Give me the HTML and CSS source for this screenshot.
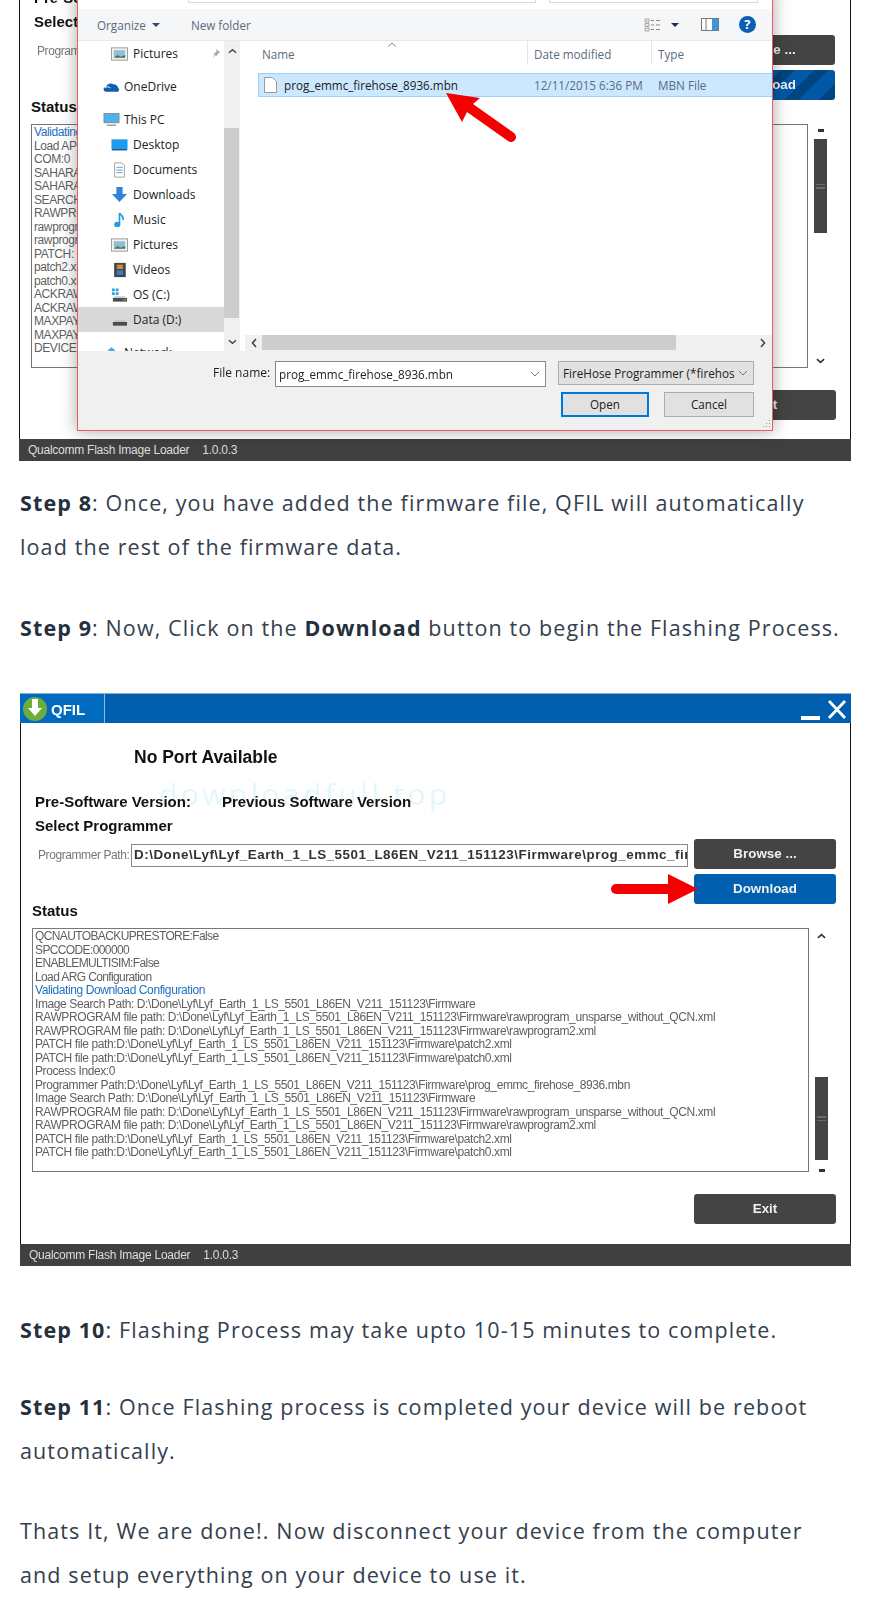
FILE: index.html
```html
<!DOCTYPE html>
<html lang="en">
<head>
<meta charset="utf-8">
<title>Flashing steps</title>
<link rel="stylesheet" href="styles.css">
</head>
<body>
<article class="article">
  <figure class="shot shot-first">
    <div class="qfil qfil-clipped">
      <div class="title"><div class="title-tab"><svg class="logo" viewBox="0 0 24 24"><circle cx="12" cy="12" r="12" fill="#6cae3c"/><path d="M9 2h6v9h4l-7 8-7-8h4z" fill="#fff"/></svg><span>QFIL</span></div><div class="win-btns"><i class="win-min"></i><svg class="win-x" viewBox="0 0 20 20"><path d="M2 1l16 17M18 1L2 18" stroke="#fff" stroke-width="2.800" fill="none"/></svg></div></div>
      <div class="qfil-body">
        <p class="port">No Port Available</p>
        <div class="versions"><span>Pre-Software Version:</span><span>Previous Software Version</span></div>
        <p class="select">Select Programmer</p>
        <div class="path-row">
          <span class="path-label">Programmer Path:</span>
          <div class="path-input"></div>
          <div class="buttons"><div class="btn">Browse ...</div><div class="btn btn-stripe">Download</div></div>
        </div>
        <p class="status">Status</p>
        <div class="log-row">
          <div class="log">
            <div class="blue">Validating</div><div>Load APPS</div><div>COM:0</div><div>SAHARA</div><div>SAHARA</div><div>SEARCH</div><div>RAWPROG</div><div>rawprogram</div><div>rawprogram</div><div>PATCH:</div><div>patch2.xml</div><div>patch0.xml</div><div>ACKRAW</div><div>ACKRAW</div><div>MAXPAYLOAD</div><div>MAXPAYLOAD</div><div>DEVICE</div>
          </div>
          <div class="sbar">
            <i class="sbar-minus"></i>
            <div class="thumb thumb-first"><i></i><i></i></div>
            <svg class="sbar-chev sbar-end" viewBox="0 0 10 6"><path d="M1 1l4 3.500 4-3.500" stroke="#333" stroke-width="1.800" fill="none"/></svg>
          </div>
        </div>
        <div class="exit-row"><div class="btn">Exit</div></div>
      </div>
      <div class="statusbar"><span>Qualcomm Flash Image Loader</span><span>1.0.0.3</span></div>
    </div>

    <div class="dialog">
      <div class="d-address"><i class="d-path"></i><i class="d-search"></i></div>
      <div class="d-toolbar">
        <span class="d-organize">Organize</span><i class="d-caret"></i>
        <span class="d-new">New folder</span>
        <svg class="d-views" viewBox="0 0 18 14"><path d="M1 1h4v3H1zM1 5.500h4v3H1zM1 10h4v3H1z" fill="#e6e6e6" stroke="#999" stroke-width=".8"/><path d="M7 2.500h3M12 2.500h4M7 7h3M12 7h4M7 11.500h3M12 11.500h4" stroke="#888" stroke-width="1.200"/></svg>
        <i class="d-caret d-caret-dark"></i>
        <svg class="d-pane" viewBox="0 0 18 13"><rect x=".5" y=".5" width="17" height="12" fill="#fff" stroke="#777"/><rect x="11" y="1" width="6" height="11" fill="#3d97e0"/><path d="M5 1v11" stroke="#777"/></svg>
        <span class="d-help">?</span>
      </div>
      <div class="d-main">
        <nav class="d-nav">
          <div class="nrow n2"><svg class="ic" viewBox="0 0 18 16"><rect x=".5" y="1.500" width="17" height="13" fill="#f2f2f2" stroke="#999"/><rect x="3" y="4" width="12" height="8" fill="#8fc0d8"/><path d="M3 12l4-3 3 2 5-2v3z" fill="#4d7a55"/></svg><span>Pictures</span><svg class="pin" viewBox="0 0 12 12"><path d="M7 1l4 4-2 1-2 3-1-1-3 3 2-4-1-1 3-2z" fill="#aaa"/></svg></div>
          <div class="nrow n1 gap"><svg class="ic" viewBox="0 0 18 12"><path d="M1 10c-1-2 0-4 2-4 1-3 5-5 8-3 3 0 5 2 5 4 2 1 1 4-1 4H3z" fill="#0f5cb0"/><path d="M2 7c2-2 5-1 6 0" stroke="#fff" fill="none"/></svg><span>OneDrive</span></div>
          <div class="nrow n1 gap"><svg class="ic" viewBox="0 0 18 16"><rect x="1" y="1" width="16" height="10" fill="#4db2ee" stroke="#777" stroke-width=".7"/><path d="M4 13.500h10" stroke="#999" stroke-width="1.500"/></svg><span>This PC</span></div>
          <div class="nrow n2"><svg class="ic" viewBox="0 0 18 14"><rect x=".5" y="1" width="17" height="11" fill="#1e9af0"/><path d="M1 12h16" stroke="#145a90" stroke-width="1.500"/></svg><span>Desktop</span></div>
          <div class="nrow n2"><svg class="ic" viewBox="0 0 18 18"><path d="M3.500 1h8l3 3v13h-11z" fill="#fff" stroke="#999"/><path d="M5.500 6h7M5.500 9h7M5.500 12h7" stroke="#4a9ad4"/></svg><span>Documents</span></div>
          <div class="nrow n2"><svg class="ic" viewBox="0 0 18 18"><path d="M5.500 0h7v8h5L9 17 .5 8h5z" fill="#2f85d6"/></svg><span>Downloads</span></div>
          <div class="nrow n2"><svg class="ic" viewBox="0 0 18 18"><path d="M9 1v12" stroke="#1b9be8" stroke-width="1.800"/><ellipse cx="6.500" cy="14" rx="3.500" ry="3" fill="#1b9be8"/><path d="M9 1c1 3 5 3 4 8" stroke="#1b9be8" stroke-width="1.800" fill="none"/></svg><span>Music</span></div>
          <div class="nrow n2"><svg class="ic" viewBox="0 0 18 16"><rect x=".5" y="1.500" width="17" height="13" fill="#f2f2f2" stroke="#999"/><rect x="3" y="4" width="12" height="8" fill="#8fc0d8"/><path d="M3 12l4-3 3 2 5-2v3z" fill="#4d7a55"/></svg><span>Pictures</span></div>
          <div class="nrow n2"><svg class="ic" viewBox="0 0 18 18"><rect x="3" y="1" width="13" height="16" fill="#3a4650"/><rect x="6" y="3" width="7" height="5" fill="#d08b3a"/><rect x="6" y="9.500" width="7" height="5" fill="#3a80c0"/></svg><span>Videos</span></div>
          <div class="nrow n2"><svg class="ic" viewBox="0 0 18 16"><path d="M1 1h3v3H1zM5 1h3v3H5zM1 5h3v3H1zM5 5h3v3H5z" fill="#2fa3e6"/><rect x="2" y="11" width="15" height="4" fill="#4d4d4d"/><path d="M4 10h11" stroke="#bbb"/><path d="M13 13h3" stroke="#7ec850"/></svg><span>OS (C:)</span></div>
          <div class="nrow n2 current"><svg class="ic" viewBox="0 0 18 16"><rect x="2" y="10" width="15" height="4" fill="#4d4d4d"/><path d="M4 9h11" stroke="#bbb"/></svg><span>Data (D:)</span></div>
          <div class="nrow n1 gap"><svg class="ic" viewBox="0 0 18 16"><path d="M1 14c1-6 5-10 8-12 3 2 7 6 8 12z" fill="#5ba4d8"/></svg><span>Network</span></div>
        </nav>
        <div class="d-vbar"><svg class="chev" viewBox="0 0 10 6"><path d="M1 5l4-3.500 4 3.500" stroke="#444" stroke-width="1.600" fill="none"/></svg><div class="d-vthumb"></div><svg class="chev" viewBox="0 0 10 6"><path d="M1 1l4 3.500 4-3.500" stroke="#444" stroke-width="1.600" fill="none"/></svg></div>
        <div class="d-list">
          <div class="l-head"><span class="l-name">Name<svg class="sort" viewBox="0 0 10 5"><path d="M1 4.500l4-3.500 4 3.500" stroke="#888" fill="none"/></svg></span><span class="l-col">Date modified</span><span class="l-col">Type</span></div>
          <div class="l-row"><span class="l-file"><svg class="f-ic" viewBox="0 0 13 16"><path d="M.5.500h8l4 4v11H.5z" fill="#fff" stroke="#999"/></svg>prog_emmc_firehose_8936.mbn</span><span class="l-cell">12/11/2015 6:36 PM</span><span class="l-cell">MBN File</span></div>
          <div class="l-space"></div>
          <div class="d-hbar"><svg class="hchev" viewBox="0 0 6 10"><path d="M5 1L1.500 5 5 9" stroke="#444" stroke-width="1.600" fill="none"/></svg><div class="d-hthumb"></div><svg class="hchev" viewBox="0 0 6 10"><path d="M1 1l3.500 4L1 9" stroke="#444" stroke-width="1.600" fill="none"/></svg></div>
        </div>
      </div>
      <div class="d-foot">
        <div class="f-line">
          <span class="f-label">File name:</span>
          <div class="f-input"><span>prog_emmc_firehose_8936.mbn</span><svg class="combo" viewBox="0 0 10 6"><path d="M1 1l4 4 4-4" stroke="#777" fill="none"/></svg></div>
          <div class="f-filter"><span>FireHose Programmer (*firehos</span><svg class="combo" viewBox="0 0 10 6"><path d="M1 1l4 4 4-4" stroke="#777" fill="none"/></svg></div>
        </div>
        <div class="f-actions"><div class="f-btn f-primary">Open</div><div class="f-btn">Cancel</div></div>
        <svg class="grip" viewBox="0 0 10 10"><path d="M8 1h1v1H8zM5 4h1v1H5zM8 4h1v1H8zM2 7h1v1H2zM5 7h1v1H5zM8 7h1v1H8z" fill="#999"/></svg>
      </div>
    </div>
    <svg class="red-arrow" viewBox="0 0 70 52"><path d="M0 0l34 5-7 6 41 29a5 5 0 0 1-6 8L21 19l-5 10z" fill="#f40000"/></svg>
  </figure>

  <p class="para para-first"><b>Step 8</b>: Once, you have added the firmware file, QFIL will automatically load the rest of the firmware data.</p>
  <p class="para para-nine"><b>Step 9</b>: Now, Click on the <b>Download</b> button to begin the Flashing Process.</p>

  <figure class="shot shot-second">
    <div class="qfil">
      <div class="title"><div class="title-tab"><svg class="logo" viewBox="0 0 24 24"><circle cx="12" cy="12" r="12" fill="#6cae3c"/><path d="M9 2h6v9h4l-7 8-7-8h4z" fill="#fff"/></svg><span>QFIL</span></div><div class="win-btns"><i class="win-min"></i><svg class="win-x" viewBox="0 0 20 20"><path d="M2 1l16 17M18 1L2 18" stroke="#fff" stroke-width="2.800" fill="none"/></svg></div></div>
      <div class="qfil-body">
        <span class="watermark">downloadfull.top</span>
        <p class="port">No Port Available</p>
        <div class="versions"><span>Pre-Software Version:</span><span>Previous Software Version</span></div>
        <p class="select">Select Programmer</p>
        <div class="path-row">
          <span class="path-label">Programmer Path:</span>
          <div class="path-input"><span>D:\Done\Lyf\Lyf_Earth_1_LS_5501_L86EN_V211_151123\Firmware\prog_emmc_firehose_8936.mbn</span></div>
          <div class="buttons"><div class="btn">Browse ...</div><div class="btn btn-blue">Download<svg class="dl-arrow" viewBox="0 0 87 30"><path d="M5 10h52V0l30 15-30 15V20H5a5 5 0 0 1 0-10z" fill="#f40000"/></svg></div></div>
        </div>
        <p class="status">Status</p>
        <div class="log-row">
          <div class="log">
            <div class="caps">QCNAUTOBACKUPRESTORE:False</div>
            <div class="caps">SPCCODE:000000</div>
            <div class="caps">ENABLEMULTISIM:False</div>
            <div class="caps">Load ARG Configuration</div>
            <div class="blue">Validating Download Configuration</div>
            <div>Image Search Path: D:\Done\Lyf\Lyf_Earth_1_LS_5501_L86EN_V211_151123\Firmware</div>
            <div>RAWPROGRAM file path: D:\Done\Lyf\Lyf_Earth_1_LS_5501_L86EN_V211_151123\Firmware\rawprogram_unsparse_without_QCN.xml</div>
            <div>RAWPROGRAM file path: D:\Done\Lyf\Lyf_Earth_1_LS_5501_L86EN_V211_151123\Firmware\rawprogram2.xml</div>
            <div>PATCH file path:D:\Done\Lyf\Lyf_Earth_1_LS_5501_L86EN_V211_151123\Firmware\patch2.xml</div>
            <div>PATCH file path:D:\Done\Lyf\Lyf_Earth_1_LS_5501_L86EN_V211_151123\Firmware\patch0.xml</div>
            <div>Process Index:0</div>
            <div>Programmer Path:D:\Done\Lyf\Lyf_Earth_1_LS_5501_L86EN_V211_151123\Firmware\prog_emmc_firehose_8936.mbn</div>
            <div>Image Search Path: D:\Done\Lyf\Lyf_Earth_1_LS_5501_L86EN_V211_151123\Firmware</div>
            <div>RAWPROGRAM file path: D:\Done\Lyf\Lyf_Earth_1_LS_5501_L86EN_V211_151123\Firmware\rawprogram_unsparse_without_QCN.xml</div>
            <div>RAWPROGRAM file path: D:\Done\Lyf\Lyf_Earth_1_LS_5501_L86EN_V211_151123\Firmware\rawprogram2.xml</div>
            <div>PATCH file path:D:\Done\Lyf\Lyf_Earth_1_LS_5501_L86EN_V211_151123\Firmware\patch2.xml</div>
            <div>PATCH file path:D:\Done\Lyf\Lyf_Earth_1_LS_5501_L86EN_V211_151123\Firmware\patch0.xml</div>
          </div>
          <div class="sbar">
            <svg class="sbar-chev" viewBox="0 0 10 6"><path d="M1 5l4-3.500 4 3.500" stroke="#333" stroke-width="1.800" fill="none"/></svg>
            <div class="thumb thumb-second"><i></i><i></i></div>
            <i class="sbar-minus"></i>
          </div>
        </div>
        <div class="exit-row"><div class="btn">Exit</div></div>
      </div>
      <div class="statusbar"><span>Qualcomm Flash Image Loader</span><span>1.0.0.3</span></div>
    </div>
  </figure>

  <p class="para para-after"><b>Step 10</b>: Flashing Process may take upto 10-15 minutes to complete.</p>
  <p class="para para-tight"><b>Step 11</b>: Once Flashing process is completed your device will be reboot automatically.</p>
  <p class="para para-last">Thats It, We are done!. Now disconnect your device from the computer and setup everything on your device to use it.</p>
</article>
</body>
</html>
```

FILE: styles.css
```css
* { box-sizing: border-box; }
html, body { margin: 0; padding: 0; background: #fff; }
body { overflow: hidden; height: 1600px; }
.article { padding: 0 20px; }

.para {
  margin: 34px 0 0;
  max-width: 825px;
  font: 400 21.500px/44px "Open Sans", sans-serif;
  letter-spacing: 1.120px;
  color: #34404e;
}
.para b { font-weight: 700; color: #24303e; }
.para-first { margin-top: 20px; }
.para-nine { margin-top: 37px; }
.para-after { margin-top: 42px; }
.para-tight { margin-top: 33px; }
.para-last { margin-top: 36px; }

.shot { margin: 0; position: relative; filter: blur(.3px); }
.shot-first { height: 461px; margin-left: -1px; width: 832px; overflow: hidden; }
.shot-second { height: 573px; margin-top: 43px; width: 831px; }

/* QFIL window */
.qfil {
  height: 573px;
  display: flex;
  flex-direction: column;
  border-left: 1.5px solid #111;
  border-right: 1.5px solid #111;
  font-family: "Liberation Sans", Arial, sans-serif;
  background: #fff;
}
.qfil-clipped { height: 572px; margin-top: -111px; }
.title {
  height: 30px;
  flex: none;
  margin: 0 -1px;
  background: #005fae;
  border-top: 1px solid #8aa8d0;
  display: flex;
  justify-content: space-between;
}
.title-tab {
  width: 85px;
  display: flex;
  align-items: center;
  gap: 4px;
  padding: 1px 0 0 3px;
  background: #0069c0;
  border-right: 1.5px solid #8fb8de;
  color: #fff;
  font-weight: 700;
  font-size: 15px;
}
.logo { width: 24px; height: 24px; }
.win-btns { display: flex; align-items: flex-start; gap: 7px; padding: 6px 4px 0 0; }
.win-min { width: 19px; height: 4px; background: #fff; margin-top: 16px; }
.win-x { width: 20px; height: 20px; }

.qfil-body { position: relative; flex: 1; padding: 0 14px 0 11px; display: flex; flex-direction: column; }
.watermark {
  position: absolute;
  left: 138px;
  top: 53px;
  font: 400 30px/36px "Open Sans", sans-serif;
  letter-spacing: 3.400px;
  color: #e4f7fc;
  white-space: nowrap;
}
.port { position: relative; margin: 23px 0 0 102px; font-size: 17.500px; line-height: 22px; font-weight: 700; color: #111; }
.versions { position: relative; margin-top: 23px; display: flex; gap: 31px; padding-left: 3px; font-size: 15px; line-height: 22px; font-weight: 700; color: #111; }
.select { position: relative; margin: 2px 0 0 3px; font-size: 15px; line-height: 22px; font-weight: 700; color: #111; }
.path-row { display: flex; align-items: flex-start; position: relative; margin-top: 2px; }
.path-label { width: 99px; flex: none; padding: 5px 0 0 6px; font-size: 12px; line-height: 22px; color: #777; letter-spacing: -.42px; white-space: nowrap; }
.path-input {
  width: 557px;
  flex: none;
  height: 23px;
  margin-top: 5px;
  border: 1.5px solid #888;
  overflow: hidden;
  white-space: nowrap;
  font-size: 13.400px;
  letter-spacing: .52px;
  line-height: 20px;
  font-weight: 700;
  color: #333;
  padding-left: 2px;
}
.buttons { width: 142px; margin-left: 6px; flex: none; display: flex; flex-direction: column; gap: 5px; }
.btn {
  position: relative;
  height: 30px;
  border-radius: 3px;
  background: #444;
  color: #f0f0f0;
  font-size: 13.400px;
  font-weight: 700;
  line-height: 30px;
  text-align: center;
}
.btn-blue { background: #005fae; }
.btn-stripe { background: repeating-linear-gradient(135deg, #0058a6 0 14px, #00457f 14px 24px); }
.dl-arrow { position: absolute; right: calc(100% - 4px); top: 0; width: 87px; height: 30px; }
.status { margin: -1px 0 0; height: 16px; font-size: 15px; line-height: 16px; font-weight: 700; color: #111; }
.log-row { display: flex; margin-top: 9px; height: 244px; }
.log {
  width: 777px;
  flex: none;
  border: 1.5px solid #777;
  padding: 1px 0 0 2px;
  font-size: 12px;
  line-height: 13.500px;
  letter-spacing: -.4px;
  color: #5f5f5f;
  white-space: nowrap;
  overflow: hidden;
}
.caps { letter-spacing: -.62px; }
.blue { color: #1f6fc0; }
.sbar { width: 25px; padding: 5px 0 0; display: flex; flex-direction: column; align-items: center; }
.sbar-chev { width: 9px; height: 6px; flex: none; }
.sbar-end { margin-top: auto; margin-bottom: 4px; }
.sbar-minus { width: 6px; height: 3px; background: #333; flex: none; }
.thumb { width: 13px; background: #444; display: flex; flex-direction: column; gap: 2px; align-items: center; justify-content: center; }
.thumb i { width: 9px; height: 1.500px; background: #6a6a6a; }
.thumb-first { height: 94px; margin-top: 7px; }
.thumb-second { height: 83px; margin-top: auto; margin-bottom: 9px; }
.exit-row { display: flex; justify-content: flex-end; margin-top: 22px; }
.exit-row .btn { width: 142px; }
.statusbar {
  margin-top: auto;
  height: 22px;
  flex: none;
  margin-left: -1px;
  margin-right: -1px;
  background: #404040;
  color: #ddd;
  font-size: 12px;
  line-height: 22px;
  letter-spacing: -.25px;
  padding-left: 9px;
  display: flex;
  gap: 13px;
}

/* Windows file dialog */
.dialog {
  position: absolute;
  left: 58px;
  top: -11px;
  width: 696px;
  height: 442px;
  border: 1px solid #ec5a69;
  background: #f0f0f0;
  box-shadow: 0 0 16px rgba(0,0,0,.35);
  font-family: "Open Sans", sans-serif;
  font-size: 11.700px;
  color: #222;
  display: flex;
  flex-direction: column;
}
.d-address { height: 19px; flex: none; background: #fff; position: relative; display: flex; gap: 13px; padding-left: 110px; }
.d-path { width: 348px; height: 13px; border: 1px solid #d9d9d9; }
.d-search { width: 209px; height: 13px; border: 1px solid #d9d9d9; }
.d-toolbar {
  height: 32px;
  flex: none;
  background: #f5f6f7;
  border-bottom: 1px solid #e8e8e8;
  display: flex;
  align-items: center;
  color: #5a6b80;
  padding-left: 19px;
}
.d-caret { width: 0; height: 0; border: 4px solid transparent; border-top-color: #33496b; border-bottom: 0; margin-left: 6px; }
.d-new { margin-left: 31px; }
.d-views { width: 18px; height: 14px; margin-left: 393px; }
.d-caret-dark { margin-left: 9px; border-top-color: #1a2f50; }
.d-pane { width: 18px; height: 13px; margin-left: 22px; }
.d-help { width: 17px; height: 17px; margin-left: 20px; border-radius: 50%; background: #0a5fb4; color: #fff; font-weight: 700; font-size: 13px; line-height: 17px; text-align: center; }
.d-main { height: 310px; flex: none; background: #fff; display: grid; grid-template-columns: 146px 16px 1fr; overflow: hidden; }
.d-nav { overflow: hidden; }
.nrow { height: 25px; display: flex; align-items: center; font-size: 12px; color: #222; }
.nrow .ic { width: 17px; height: 16px; flex: none; margin-right: 5px; }
.n1 { padding-left: 25px; }
.n1 .ic { margin-right: 4px; }
.n2 { padding-left: 33px; }
.gap { margin-top: 8px; }
.current { background: #d9d9d9; }
.pin { width: 11px; height: 11px; margin-left: 32px; }
.d-vbar { background: #f0f0f0; display: flex; flex-direction: column; align-items: center; justify-content: space-between; padding: 7px 0 6px; position: relative; }
.chev { width: 9px; height: 6px; }
.d-vthumb { position: absolute; left: 0; right: 1px; top: 87px; height: 190px; background: #cdcdcd; }
.d-list { display: flex; flex-direction: column; min-width: 0; color: #5a6b80; padding-left: 3px; }
.l-head { height: 26px; flex: none; display: grid; grid-template-columns: 284px 124px 1fr; line-height: 26px; }
.l-name { position: relative; padding-left: 19px; }
.sort { position: absolute; left: 144px; top: 1px; width: 10px; height: 5px; }
.l-col { border-left: 1px solid #e5e5e5; padding-left: 6px; height: 24px; }
.l-row {
  height: 24px;
  flex: none;
  margin: 6px 0 0 15px;
  background: #cce8ff;
  border: 1px solid #99d1ff;
  border-width: 1px 0 1px 1px;
  display: grid;
  grid-template-columns: 268px 124px 1fr;
  line-height: 22px;
  white-space: nowrap;
}
.l-file { color: #1b1b1b; display: flex; align-items: center; gap: 7px; padding-left: 5px; }
.f-ic { width: 13px; height: 16px; flex: none; }
.l-cell { padding-left: 7px; }
.l-space { flex: 1; }
.d-hbar { height: 16px; flex: none; margin-left: 2px; background: #f0f0f0; display: flex; align-items: center; justify-content: space-between; padding: 0 6px; position: relative; }
.hchev { width: 6px; height: 10px; }
.d-hthumb { position: absolute; left: 17px; top: 0; bottom: 1px; width: 414px; background: #cdcdcd; }
.d-foot { flex: 1; position: relative; padding: 10px 17px 0 135px; }
.f-line { display: flex; align-items: flex-start; }
.f-label { width: 62px; flex: none; line-height: 23px; color: #1e1e1e; font-size: 12px; }
.f-input { width: 271px; height: 26px; flex: none; background: #fff; border: 1px solid #8a8a8a; padding-left: 3px; line-height: 24px; display: flex; justify-content: space-between; align-items: center; padding-right: 5px; }
.f-filter { width: 196px; height: 24px; flex: none; margin-left: 12px; background: #e1e1e1; border: 1px solid #adadad; padding: 0 5px 0 4px; line-height: 21px; display: flex; justify-content: space-between; align-items: center; white-space: nowrap; }
.combo { width: 10px; height: 6px; flex: none; }
.f-actions { display: flex; justify-content: flex-end; gap: 15px; margin-top: 5px; padding-right: 1px; }
.f-btn { width: 90px; height: 25px; background: #e1e1e1; border: 1px solid #adadad; text-align: center; line-height: 22px; }
.f-primary { width: 88px; border: 2px solid #0078d7; line-height: 20px; }
.grip { position: absolute; right: 1px; bottom: 1px; width: 10px; height: 10px; }
.red-arrow { position: absolute; left: 427px; top: 93px; width: 70px; height: 52px; }
```
